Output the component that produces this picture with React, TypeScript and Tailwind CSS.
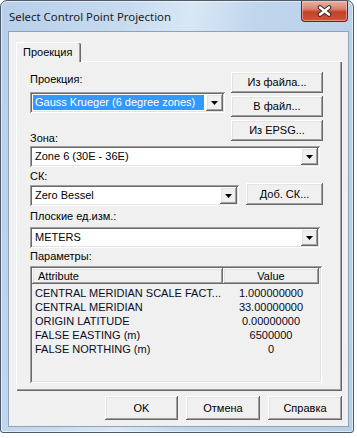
import React from "react";

const raised =
  "shadow-[inset_-1px_-1px_#696969,inset_1px_1px_#ffffff,inset_-2px_-2px_#a0a0a0,inset_2px_2px_#e3e3e3]";
const sunken =
  "shadow-[inset_1px_1px_#a0a0a0,inset_-1px_-1px_#ffffff,inset_2px_2px_#696969,inset_-2px_-2px_#e3e3e3]";

const Button = ({ label, className = "" }: { label: string; className?: string }) => (
  <div
    className={`flex items-center justify-center bg-[#f0f0f0] text-[11px] leading-[13px] text-black ${raised} ${className}`}
  >
    {label}
  </div>
);

const Combo = ({
  value,
  width,
  selected = false,
}: {
  value: string;
  width: string;
  selected?: boolean;
}) => (
  <div className={`relative flex h-[21px] items-stretch bg-white p-[2px] ${sunken} ${width}`}>
    <div className="flex flex-1 items-center py-[1px] pl-[1px] pr-[2px]">
      <span
        className={`flex h-full flex-1 items-center pl-[2px] text-[11px] ${
          selected ? "bg-[#3399ff] text-white" : "text-black"
        }`}
      >
        {value}
      </span>
    </div>
    <div className={`flex w-[17px] items-center justify-center bg-[#f0f0f0] ${raised}`}>
      <svg width="7" height="4" viewBox="0 0 7 4">
        <path d="M0 0h7L3.5 4z" fill="#000" />
      </svg>
    </div>
  </div>
);

const Label = ({ text, className = "" }: { text: string; className?: string }) => (
  <div className={`h-[13px] text-[11px] leading-[13px] text-black ${className}`}>{text}</div>
);

const params = [
  ["CENTRAL MERIDIAN SCALE FACT...", "1.000000000"],
  ["CENTRAL MERIDIAN", "33.00000000"],
  ["ORIGIN LATITUDE", "0.00000000"],
  ["FALSE EASTING (m)", "6500000"],
  ["FALSE NORTHING (m)", "0"],
];

export default function App() {
  return (
    <div className="h-[438px] w-[357px] overflow-hidden bg-white font-['Liberation_Sans',Arial,sans-serif]">
      <div className="flex h-[433px] w-[354px] flex-col rounded-t-[7px] rounded-b-[3px] border border-[#4d5a6a] bg-[linear-gradient(100deg,#b7cfe9_0%,#c7dbf0_30%,#d9e7f5_45%,#c0d6ed_60%,#b6cee8_100%)] pb-[5px] pl-[7px] pr-[4px] shadow-[inset_0_0_0_1px_rgba(255,255,255,0.55)]">
        {/* title bar */}
        <div className="flex h-[30px] items-start">
          <div className="pl-[1px] pt-[8px] font-['Noto_Sans',sans-serif] text-[11.4px] leading-[16px] text-[#1b1b1b]">
            Select Control Point Projection
          </div>
          <div className="ml-auto mr-[1px] flex h-[21px] w-[47px] items-center justify-center rounded-b-[4px] border border-t-0 border-[#6b2418] bg-[linear-gradient(180deg,#eab0a3_0%,#d98470_40%,#c4402a_55%,#d2533a_100%)] shadow-[inset_0_0_0_1px_rgba(255,210,200,0.5)]">
            <svg width="15" height="12" viewBox="0 0 15 12">
              <path d="M3 2.5 L12 9.5 M12 2.5 L3 9.5" stroke="#3a2a28" strokeWidth="4.6" strokeLinecap="round" />
              <path d="M3 2.5 L12 9.5 M12 2.5 L3 9.5" stroke="#ffffff" strokeWidth="2.6" strokeLinecap="round" />
            </svg>
          </div>
        </div>

        {/* client area */}
        <div className="flex flex-1 flex-col border border-[#8ea2b8] bg-[#f0f0f0] pl-[7px] pr-[6px] pt-[10px]">
          {/* tab */}
          <div className="relative z-10 -mb-[1px] flex h-[20px] w-[65px] items-center rounded-t-[2px] border-l border-t border-white bg-[#f0f0f0] pl-[6px] text-[11px] text-black shadow-[inset_-1px_0_#696969,inset_-2px_0_#a0a0a0]">
            Проекция
          </div>
          {/* panel */}
          <div className="flex h-[330px] w-[326px] flex-col border-l border-t border-white bg-[#f0f0f0] pl-[13px] pt-[10px] shadow-[inset_-1px_-1px_#696969,inset_-2px_-2px_#a0a0a0]">
            <div className="flex items-start">
              <div className="flex w-[195px] flex-col">
                <Label text="Проекция:" className="mt-[1px]" />
                <div className="mt-[6px]">
                  <Combo value="Gauss Krueger (6 degree zones)" width="w-[195px]" selected />
                </div>
                <Label text="Зона:" className="mt-[19px]" />
              </div>
              <div className="ml-[6px] flex w-[92px] flex-col gap-[3px]">
                <Button label="Из файла..." className="h-[21px]" />
                <Button label="В файл..." className="h-[21px]" />
                <Button label="Из EPSG..." className="h-[21px]" />
              </div>
            </div>
            <div className="mt-[1px]">
              <Combo value="Zone 6 (30E - 36E)" width="w-[290px]" />
            </div>
            <Label text="СК:" className="mt-[3px]" />
            <div className="flex items-start">
              <div className="mt-[2px]">
                <Combo value="Zero Bessel" width="w-[209px]" />
              </div>
              <Button label="Доб. СК..." className="ml-[7px] h-[22px] w-[77px]" />
            </div>
            <Label text="Плоские ед.изм.:" className="mt-[4px]" />
            <div className="mt-[4px]">
              <Combo value="METERS" width="w-[290px]" />
            </div>
            <Label text="Параметры:" className="mt-[2px]" />
            {/* list view */}
            <div className={`mt-[3px] flex h-[117px] w-[292px] flex-col bg-[#f0f0f0] p-[2px] ${sunken}`}>
              <div className="flex h-[16px] text-[11px] leading-[16px] text-black">
                <div className={`w-[191px] bg-[#f0f0f0] pl-[6px] ${raised}`}>Attribute</div>
                <div className={`w-[96px] bg-[#f0f0f0] text-center ${raised}`}>Value</div>
              </div>
              <div className="flex flex-col pt-[2px]">
                {params.map(([name, value]) => (
                  <div key={name} className="flex h-[14px] items-center text-[11px] leading-[14px] text-[#0a0a1e]">
                    <div className="w-[191px] whitespace-nowrap pl-[3px]">{name}</div>
                    <div className="w-[96px] text-center">{value}</div>
                  </div>
                ))}
              </div>
            </div>
          </div>
          {/* dialog buttons */}
          <div className="mt-[5px] flex w-[326px] justify-end gap-[8px]">
            <Button label="OK" className="h-[24px] w-[73px]" />
            <Button label="Отмена" className="h-[24px] w-[74px]" />
            <Button label="Справка" className="h-[24px] w-[74px]" />
          </div>
        </div>
      </div>
    </div>
  );
}
